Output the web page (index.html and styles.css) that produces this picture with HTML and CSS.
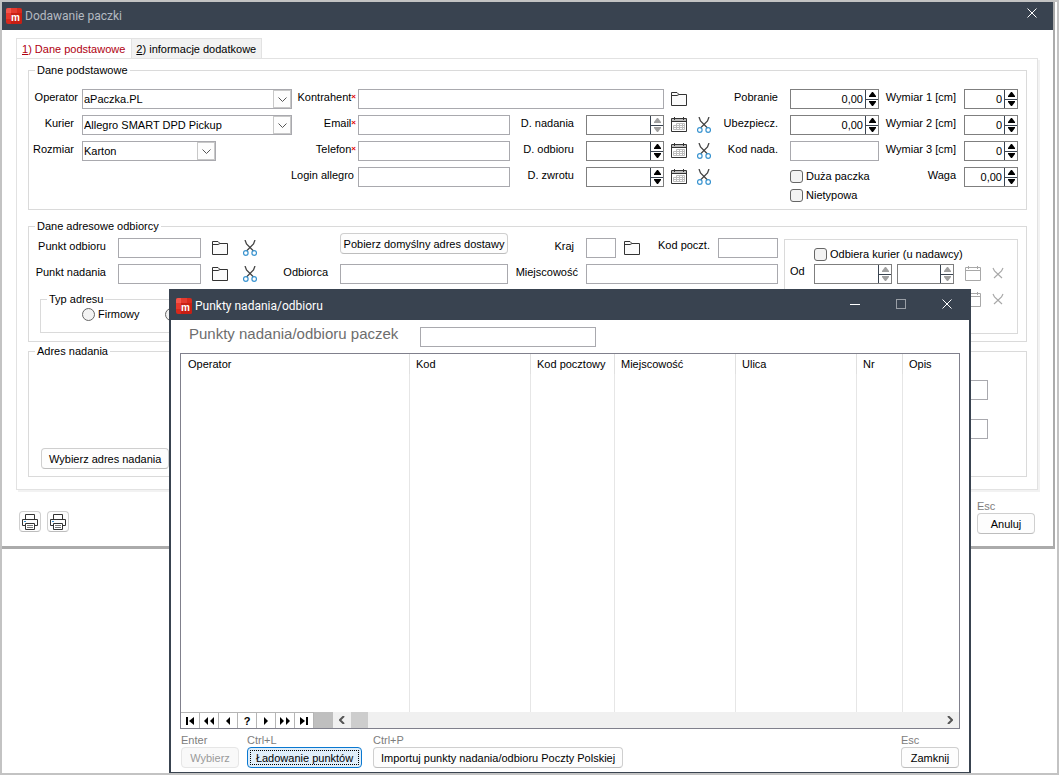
FILE: index.html
```html
<!DOCTYPE html>
<html lang="pl">
<head>
  <meta charset="UTF-8">
  <title>Dodawanie paczki</title>
  <link rel="stylesheet" href="styles.css">
</head>
<body>

  <!-- icons -->
  <svg class="sprite" aria-hidden="true">
    <symbol id="logo" viewBox="0 0 16 16">
      <rect width="16" height="16" rx="2" fill="#d9291c"/>
      <path d="M2 0h3v5H0V2a2 2 0 0 1 2-2z" fill="#f4564c"/>
      <path d="M5 0h6v5H5z" fill="#e53a2e"/>
      <path d="M0 5h5v6H0z" fill="#e8392d"/>
      <path d="M5 5h11v9a2 2 0 0 1-2 2H5z" fill="#c81f14"/>
    </symbol>
    <symbol id="folder" viewBox="0 0 16 14">
      <path d="M.5 13.500V.5h5.500l2 2h7.500v11z" fill="#fbfbfb" stroke="#333"/>
      <path d="M1 3.500h5l2-1" fill="none" stroke="#333"/>
    </symbol>
    <symbol id="calendar" viewBox="0 0 16 16">
      <path d="M1 2h14v3H1z" fill="#bdbdbd"/>
      <path d="M.5 1.500h15v13H.5zM.5 4.500h15M3.500 0v3M12.500 0v3" fill="none" stroke="#333"/>
      <path d="M5.500 6.500h8v6h-11v-4M2.500 8.500h11M2.500 10.500h11M5.500 6.500v6M8.500 6.500v6M11.500 6.500v6" fill="none" stroke="#bdbdbd"/>
    </symbol>
    <symbol id="calendar-off" viewBox="0 0 16 16">
      <path d="M.5 1.500h15v13H.5zM.5 4.500h15M3.500 0v3M12.500 0v3" fill="none" stroke="#a8a8a8"/>
    </symbol>
    <symbol id="scissors" viewBox="0 0 14 16">
      <path d="M2 0l1.500 4L10.500 11M12 0l-1.500 4L3.500 11" fill="none" stroke="#444" stroke-width="1.300"/>
      <circle cx="2.800" cy="13" r="2.300" fill="#fff" stroke="#3a94d0" stroke-width="1.200"/>
      <circle cx="11.200" cy="13" r="2.300" fill="#fff" stroke="#3a94d0" stroke-width="1.200"/>
    </symbol>
    <symbol id="scissors-off" viewBox="0 0 14 16">
      <path d="M2 2l1.500 3L11 12M12 2l-1.500 3L3 12" fill="none" stroke="#a8a8a8" stroke-width="1.200"/>
    </symbol>
    <symbol id="printer" viewBox="0 0 16 16">
      <path d="M3.500 5.500v-5h9v5M3.500 11.500h-3v-6h15v6h-3" fill="none" stroke="#333"/>
      <path d="M3.500 9.500h9v6h-9z" fill="#fff" stroke="#333"/>
      <path d="M5 11.500h6M5 13.500h6" stroke="#777"/>
      <path d="M2 7.500h2" stroke="#3a94d0"/>
    </symbol>
    <symbol id="chevron" viewBox="0 0 9 5">
      <path d="M.5.5l4 4 4-4" fill="none" stroke="#555"/>
    </symbol>
    <symbol id="up" viewBox="0 0 7 5">
      <path d="M3 0h1l3 4v1H0V4z" fill="currentColor"/>
    </symbol>
    <symbol id="down" viewBox="0 0 7 5">
      <path d="M0 0h7v1L4 5H3L0 1z" fill="currentColor"/>
    </symbol>
    <symbol id="close" viewBox="0 0 10 10">
      <path d="M.5.5l9 9M9.500.5l-9 9" stroke="#fff"/>
    </symbol>
  </svg>

  <div class="desktop">

    <div class="window">
      <div class="titlebar inactive">
        <span class="logo"><svg class="i16"><use href="#logo"/></svg><b>m</b></span>
        <span>Dodawanie paczki</span>
        <button class="win-btn" aria-label="Zamknij okno"><svg class="i10"><use href="#close"/></svg></button>
      </div>

      <div class="window-body">
        <div class="tabs">
          <button class="tab active"><u>1</u>) Dane podstawowe</button>
          <button class="tab"><u>2</u>) informacje dodatkowe</button>
        </div>

        <div class="panel">
          <fieldset class="group basic">
            <legend>Dane podstawowe</legend>
            <div class="basic-grid">
              <label class="lbl tight" for="operator">Operator</label>
              <span class="combo">
                <select id="operator"><option>aPaczka.PL</option></select>
                <span class="combo-arrow"><svg><use href="#chevron"/></svg></span>
              </span>
              <label class="lbl contact" for="kontrahent">Kontrahent<i class="req">×</i></label>
              <input class="wide" id="kontrahent" type="text">
              <div class="icons"><button class="icon" aria-label="Wybierz kontrahenta"><svg class="folder"><use href="#folder"/></svg></button></div>
              <label class="lbl" for="pobranie">Pobranie</label>
              <span class="spin">
                <input id="pobranie" type="text" value="0,00">
                <span class="arrows"><button aria-label="Więcej"><svg><use href="#up"/></svg></button><button aria-label="Mniej"><svg><use href="#down"/></svg></button></span>
              </span>
              <label class="lbl mid" for="wymiar1">Wymiar 1 [cm]</label>
              <span class="spin">
                <input id="wymiar1" type="text" value="0">
                <span class="arrows"><button aria-label="Więcej"><svg><use href="#up"/></svg></button><button aria-label="Mniej"><svg><use href="#down"/></svg></button></span>
              </span>

              <label class="lbl mid" for="kurier">Kurier</label>
              <span class="combo">
                <select id="kurier"><option>Allegro SMART DPD Pickup</option></select>
                <span class="combo-arrow"><svg><use href="#chevron"/></svg></span>
              </span>
              <label class="lbl contact" for="email">Email<i class="req">×</i></label>
              <input id="email" type="text">
              <label class="lbl" for="nadanie">D. nadania</label>
              <span class="spin off">
                <input id="nadanie" type="text">
                <span class="arrows"><button aria-label="Później"><svg><use href="#up"/></svg></button><button aria-label="Wcześniej"><svg><use href="#down"/></svg></button></span>
              </span>
              <div class="icons">
                <button class="icon" aria-label="Kalendarz"><svg class="i16"><use href="#calendar"/></svg></button>
                <button class="icon" aria-label="Wyczyść"><svg class="cut"><use href="#scissors"/></svg></button>
              </div>
              <label class="lbl" for="ubezpiecz">Ubezpiecz.</label>
              <span class="spin">
                <input id="ubezpiecz" type="text" value="0,00">
                <span class="arrows"><button aria-label="Więcej"><svg><use href="#up"/></svg></button><button aria-label="Mniej"><svg><use href="#down"/></svg></button></span>
              </span>
              <label class="lbl mid" for="wymiar2">Wymiar 2 [cm]</label>
              <span class="spin">
                <input id="wymiar2" type="text" value="0">
                <span class="arrows"><button aria-label="Więcej"><svg><use href="#up"/></svg></button><button aria-label="Mniej"><svg><use href="#down"/></svg></button></span>
              </span>

              <label class="lbl mid" for="rozmiar">Rozmiar</label>
              <span class="combo short">
                <select id="rozmiar"><option>Karton</option></select>
                <span class="combo-arrow"><svg><use href="#chevron"/></svg></span>
              </span>
              <label class="lbl contact" for="telefon">Telefon<i class="req">×</i></label>
              <input id="telefon" type="text">
              <label class="lbl" for="odbior">D. odbioru</label>
              <span class="spin">
                <input id="odbior" type="text">
                <span class="arrows"><button aria-label="Później"><svg><use href="#up"/></svg></button><button aria-label="Wcześniej"><svg><use href="#down"/></svg></button></span>
              </span>
              <div class="icons">
                <button class="icon" aria-label="Kalendarz"><svg class="i16"><use href="#calendar"/></svg></button>
                <button class="icon" aria-label="Wyczyść"><svg class="cut"><use href="#scissors"/></svg></button>
              </div>
              <label class="lbl" for="kodnada">Kod nada.</label>
              <input id="kodnada" type="text">
              <label class="lbl mid" for="wymiar3">Wymiar 3 [cm]</label>
              <span class="spin">
                <input id="wymiar3" type="text" value="0">
                <span class="arrows"><button aria-label="Więcej"><svg><use href="#up"/></svg></button><button aria-label="Mniej"><svg><use href="#down"/></svg></button></span>
              </span>

              <label class="lbl tight login" for="login">Login allegro</label>
              <input id="login" type="text">
              <label class="lbl" for="zwrot">D. zwrotu</label>
              <span class="spin">
                <input id="zwrot" type="text">
                <span class="arrows"><button aria-label="Później"><svg><use href="#up"/></svg></button><button aria-label="Wcześniej"><svg><use href="#down"/></svg></button></span>
              </span>
              <div class="icons">
                <button class="icon" aria-label="Kalendarz"><svg class="i16"><use href="#calendar"/></svg></button>
                <button class="icon" aria-label="Wyczyść"><svg class="cut"><use href="#scissors"/></svg></button>
              </div>
              <div class="checks">
                <label class="check"><input type="checkbox">Duża paczka</label>
                <label class="check"><input type="checkbox">Nietypowa</label>
              </div>
              <label class="lbl mid" for="waga">Waga</label>
              <span class="spin">
                <input id="waga" type="text" value="0,00">
                <span class="arrows"><button aria-label="Więcej"><svg><use href="#up"/></svg></button><button aria-label="Mniej"><svg><use href="#down"/></svg></button></span>
              </span>
            </div>
          </fieldset>

          <fieldset class="group address">
            <legend>Dane adresowe odbiorcy</legend>
            <div class="address-grid">
              <label class="lbl" for="punktodb">Punkt odbioru</label>
              <input id="punktodb" type="text">
              <div class="icons far">
                <button class="icon" aria-label="Wybierz punkt"><svg class="folder"><use href="#folder"/></svg></button>
                <button class="icon" aria-label="Wyczyść"><svg class="cut"><use href="#scissors"/></svg></button>
              </div>
              <button class="btn fetch">Pobierz domyślny adres dostawy</button>
              <label class="lbl" for="kraj">Kraj</label>
              <input id="kraj" type="text">
              <div class="postal">
                <button class="icon" aria-label="Wybierz kraj"><svg class="folder"><use href="#folder"/></svg></button>
                <label for="kodpoczt">Kod poczt.</label>
              </div>
              <input id="kodpoczt" type="text">

              <label class="lbl" for="punktnad">Punkt nadania</label>
              <input id="punktnad" type="text">
              <div class="icons far">
                <button class="icon" aria-label="Wybierz punkt"><svg class="folder"><use href="#folder"/></svg></button>
                <button class="icon" aria-label="Wyczyść"><svg class="cut"><use href="#scissors"/></svg></button>
              </div>
              <label class="lbl" for="odbiorca">Odbiorca</label>
              <input id="odbiorca" type="text">
              <label class="lbl mid" for="miejscowosc">Miejscowość</label>
              <input class="wide" id="miejscowosc" type="text">

              <fieldset class="group type">
                <legend>Typ adresu</legend>
                <div class="radios">
                  <label class="check"><input type="radio" name="typ">Firmowy</label>
                  <label class="check"><input type="radio" name="typ" aria-label="Prywatny"></label>
                </div>
              </fieldset>

              <div class="pickup">
                <label class="check"><input type="checkbox">Odbiera kurier (u nadawcy)</label>
                <label for="od">Od</label>
                <span class="spin off">
                  <input id="od" type="text">
                  <span class="arrows"><button aria-label="Później"><svg><use href="#up"/></svg></button><button aria-label="Wcześniej"><svg><use href="#down"/></svg></button></span>
                </span>
                <span class="spin off">
                  <input type="text" aria-label="Godzina od">
                  <span class="arrows"><button aria-label="Później"><svg><use href="#up"/></svg></button><button aria-label="Wcześniej"><svg><use href="#down"/></svg></button></span>
                </span>
                <div class="icons">
                  <button class="icon" aria-label="Kalendarz"><svg class="i16"><use href="#calendar-off"/></svg></button>
                  <button class="icon" aria-label="Wyczyść"><svg class="cut"><use href="#scissors-off"/></svg></button>
                </div>
                <label for="do">Do</label>
                <span class="spin off">
                  <input id="do" type="text">
                  <span class="arrows"><button aria-label="Później"><svg><use href="#up"/></svg></button><button aria-label="Wcześniej"><svg><use href="#down"/></svg></button></span>
                </span>
                <span class="spin off">
                  <input type="text" aria-label="Godzina do">
                  <span class="arrows"><button aria-label="Później"><svg><use href="#up"/></svg></button><button aria-label="Wcześniej"><svg><use href="#down"/></svg></button></span>
                </span>
                <div class="icons">
                  <button class="icon" aria-label="Kalendarz"><svg class="i16"><use href="#calendar-off"/></svg></button>
                  <button class="icon" aria-label="Wyczyść"><svg class="cut"><use href="#scissors-off"/></svg></button>
                </div>
              </div>
            </div>
          </fieldset>

          <fieldset class="group sender">
            <legend>Adres nadania</legend>
            <div class="sender-row">
              <button class="btn">Wybierz adres nadania</button>
              <div class="sender-fields">
                <input type="text" aria-label="Ulica">
                <input type="text" aria-label="Miejscowość">
              </div>
            </div>
          </fieldset>
        </div>

        <div class="window-footer">
          <button class="btn print" aria-label="Drukuj"><svg class="i16"><use href="#printer"/></svg></button>
          <button class="btn print" aria-label="Drukuj etykietę"><svg class="i16"><use href="#printer"/></svg></button>
          <div class="action end">
            <span class="key">Esc</span>
            <button class="btn">Anuluj</button>
          </div>
        </div>
      </div>
    </div>

    <div class="dialog">
      <div class="titlebar">
        <span class="logo"><svg class="i16"><use href="#logo"/></svg><b>m</b></span>
        <span>Punkty nadania/odbioru</span>
        <div class="win-btns">
          <button class="win-btn" aria-label="Minimalizuj"><i class="min"></i></button>
          <button class="win-btn" aria-label="Maksymalizuj"><i class="max"></i></button>
          <button class="win-btn" aria-label="Zamknij okno"><svg class="i10"><use href="#close"/></svg></button>
        </div>
      </div>

      <div class="dialog-body">
        <div class="search">
          <label for="szukaj">Punkty nadania/odbioru paczek</label>
          <input id="szukaj" type="text">
        </div>

        <div class="points">
          <table>
            <colgroup>
              <col class="c-operator"><col class="c-text"><col class="c-postal"><col class="c-text"><col class="c-text"><col class="c-nr"><col>
            </colgroup>
            <thead>
              <tr><th>Operator</th><th>Kod</th><th>Kod pocztowy</th><th>Miejscowość</th><th>Ulica</th><th>Nr</th><th>Opis</th></tr>
            </thead>
            <tbody>
              <tr><td></td><td></td><td></td><td></td><td></td><td></td><td></td></tr>
            </tbody>
          </table>
          <div class="navigator">
            <button aria-label="Pierwszy"><svg viewBox="0 0 12 8"><path d="M2 0h2v8H2zM10 0v8L5 4z"/></svg></button>
            <button aria-label="Strona wstecz"><svg viewBox="0 0 12 8"><path d="M5 0v8L1 4zM11 0v8L7 4z"/></svg></button>
            <button aria-label="Poprzedni"><svg viewBox="0 0 12 8"><path d="M8 0v8L4 4z"/></svg></button>
            <button>?</button>
            <button aria-label="Następny"><svg viewBox="0 0 12 8"><path d="M4 0v8l4-4z"/></svg></button>
            <button aria-label="Strona dalej"><svg viewBox="0 0 12 8"><path d="M1 0v8l4-4zM7 0v8l4-4z"/></svg></button>
            <button aria-label="Ostatni"><svg viewBox="0 0 12 8"><path d="M2 0v8l5-4zM8 0h2v8H8z"/></svg></button>
            <span class="filler"></span>
            <div class="scroll">
              <button aria-label="W lewo"><svg viewBox="0 0 6 8"><path d="M5 0L1 4l4 4"/></svg></button>
              <span class="thumb"></span>
              <button class="right" aria-label="W prawo"><svg viewBox="0 0 6 8"><path d="M1 0l4 4-4 4"/></svg></button>
            </div>
          </div>
        </div>

        <div class="dialog-footer">
          <div class="action">
            <span class="key">Enter</span>
            <button class="btn" disabled>Wybierz</button>
          </div>
          <div class="action load">
            <span class="key">Ctrl+L</span>
            <button class="btn focused">Ładowanie punktów</button>
          </div>
          <div class="action import">
            <span class="key">Ctrl+P</span>
            <button class="btn">Importuj punkty nadania/odbioru Poczty Polskiej</button>
          </div>
          <div class="action end">
            <span class="key">Esc</span>
            <button class="btn">Zamknij</button>
          </div>
        </div>
      </div>
    </div>

  </div>

</body>
</html>
```

FILE: styles.css
```css
* {
  box-sizing: border-box;
}

body {
  margin: 0;
  font-family: "Liberation Sans", Arial, sans-serif;
  font-size: 11px;
  line-height: 14px;
  color: #000;
  background-color: #fff;
}

input, select, button {
  margin: 0;
  font: inherit;
  color: inherit;
}

button {
  padding: 0;
  border: none;
  background: none;
}

svg {
  display: block;
}

label {
  white-space: nowrap;
}

.sprite {
  position: absolute;
  width: 0;
  height: 0;
}

.desktop {
  position: relative;
  height: 100vh;
  border: 2px solid #c3c3c3;
  overflow: hidden;
}

/* windows */
.window {
  margin-right: 2px;
  border-right: 2px solid #ababab;
  border-bottom: 3px solid #ababab;
}

.titlebar {
  display: flex;
  align-items: center;
  gap: 3px;
  height: 31px;
  padding: 3px 17px 0 5px;
  background-color: #394350;
  color: #fff;
  font-family: Roboto, "Open Sans", sans-serif;
  font-size: 12px;
}

.titlebar.inactive {
  height: 28px;
  padding: 0 16px 0 4px;
  color: #b4bac1;
}

.inactive .win-btn {
  margin-left: auto;
  padding-bottom: 6px;
}

.logo {
  position: relative;
}

.logo b {
  position: absolute;
  right: 2px;
  bottom: 1px;
  font-family: "Liberation Sans", Arial, sans-serif;
  font-size: 10px;
  line-height: 10px;
  color: #fff;
}

.win-btns {
  display: flex;
  align-items: center;
  gap: 36px;
  margin-left: auto;
  padding-bottom: 4px;
}

.min {
  display: block;
  width: 10px;
  height: 1px;
  background-color: #fff;
}

.max {
  display: block;
  width: 10px;
  height: 10px;
  border: 1px solid #9a9fa6;
}

.i10 {
  width: 10px;
  height: 10px;
}

.i16 {
  width: 16px;
  height: 16px;
}

.folder {
  width: 16px;
  height: 14px;
}

.cut {
  width: 14px;
  height: 16px;
}

.window-body {
  padding: 8px 15px 0 14px;
}

/* tabs */
.tabs {
  display: flex;
  height: 20px;
}

.tab {
  padding: 0 5px;
  border: 1px solid #e2e2e2;
  border-bottom: none;
  background-color: #f2f2f2;
}

.tab + .tab {
  padding: 0 5px 0 4px;
  border-left: none;
}

.tab.active {
  padding: 0 6px 0 5px;
  background-color: #fff;
  color: #b00010;
}

.panel {
  padding: 4px 10px 12px 11px;
  border: 1px solid #e2e2e2;
  box-shadow: 2px 2px 0 #f2f2f2;
}

/* form groups */
.group {
  min-width: 0;
  margin: 0;
  border: 1px solid #dadada;
}

.group legend {
  padding: 0 2px;
}

.basic {
  padding: 12px 8px 6px 6px;
}

.address {
  margin-top: 9px;
  padding: 5px 8px 7px 6px;
}

.sender {
  margin-top: 2px;
  padding: 22px 8px 7px 6px;
}

.basic-grid {
  display: grid;
  grid-template-columns: 43px 210fr 58px 152fr 68px 78fr 44px 70px 89fr 77px 54fr;
  grid-template-rows: repeat(4, 20px) 10px;
  gap: 6px 4px;
}

.basic-grid .wide {
  grid-column: span 3;
}

.lbl {
  display: flex;
  justify-content: flex-end;
  height: 16px;
  line-height: 16px;
  padding-right: 8px;
}

.lbl.tight {
  padding-right: 0;
}

.lbl.mid {
  padding-right: 4px;
}

.lbl.contact {
  margin-right: -2px;
  padding-right: 0;
}

.login {
  grid-column: 3;
}

.req {
  font-size: 8px;
  font-style: normal;
  font-weight: bold;
  color: #e00000;
}

input[type="text"] {
  width: 100%;
  min-width: 0;
  height: 20px;
  padding: 0 2px;
  border: 1px solid #a9a9ae;
  border-radius: 0;
  background-color: #fff;
}

.combo {
  position: relative;
  height: 20px;
}

.combo.short {
  width: 64%;
}

.combo select {
  width: 100%;
  height: 20px;
  padding: 0 20px 0 1px;
  border: 1px solid #a9a9ae;
  border-radius: 0;
  background-color: #fff;
  appearance: none;
}

.combo-arrow {
  position: absolute;
  top: 1px;
  right: 1px;
  display: flex;
  align-items: center;
  justify-content: center;
  width: 18px;
  height: 18px;
  border: 1px solid #c8c8c8;
  background-color: #fdfdfd;
  pointer-events: none;
}

.combo-arrow svg {
  width: 9px;
  height: 5px;
}

.spin {
  display: flex;
  height: 20px;
  border: 1px solid #7f7f7f;
}

.spin input[type="text"] {
  flex: 1;
  height: 18px;
  border: none;
  text-align: right;
}

.arrows {
  display: flex;
  flex-direction: column;
  width: 13px;
  border-left: 1px solid #394350;
}

.arrows button {
  display: flex;
  flex: 1;
  align-items: center;
  justify-content: center;
}

.arrows button + button {
  border-top: 1px solid #394350;
}

.arrows svg {
  width: 7px;
  height: 5px;
}

.off .arrows {
  color: #a0a0a0;
}

.icons {
  display: flex;
  align-items: center;
  gap: 10px;
  height: 20px;
  padding-left: 3px;
}

.icons.far {
  gap: 15px;
  padding-left: 7px;
}

.checks {
  display: flex;
  flex-direction: column;
  gap: 3px;
  grid-row: span 2;
  grid-column: 9;
  padding-top: 1px;
}

.check {
  display: flex;
  align-items: center;
  gap: 3px;
  height: 16px;
}

.check input {
  width: 13px;
  height: 13px;
  border: 1px solid #666;
  border-radius: 3px;
  background-color: #f3f3f3;
  appearance: none;
}

.check input[type="radio"] {
  border-radius: 50%;
}

.check input:checked {
  background-color: #394350;
}

/* receiver address */
.address-grid {
  display: grid;
  grid-template-columns: 79px 83fr 72px 55px 168fr 70px 30fr 94px 60fr 236fr;
  grid-template-rows: 20px 20px auto;
  gap: 6px 4px;
}

.address-grid .wide {
  grid-column: span 3;
}

.btn {
  height: 21px;
  padding: 0 7px;
  border: 1px solid #cfcfcf;
  border-bottom-color: #bdbdbd;
  border-radius: 4px;
  background-color: #fdfdfd;
  white-space: nowrap;
}

.btn:disabled {
  border-color: #e6e6e6;
  background-color: #f9f9f9;
  color: #9a9a9a;
}

.fetch {
  grid-column: 5;
  margin-top: -5px;
  padding: 0;
}

.postal {
  display: flex;
  align-items: center;
  gap: 18px;
  padding-left: 4px;
}

.postal label {
  align-self: flex-start;
}

.type {
  grid-row: 3;
  grid-column: 1 / 10;
  align-self: start;
  margin: 2px 0 0 5px;
  padding: 0 0 10px 6px;
}

.radios {
  display: flex;
  gap: 25px;
  padding-left: 35px;
}

.pickup {
  display: grid;
  grid-template-columns: 19px 78fr 57fr 50px;
  grid-template-rows: 18px 26px 26px;
  column-gap: 5px;
  align-items: start;
  grid-row: 1 / 4;
  grid-column: 10;
  margin: 1px 0 0 2px;
  padding: 6px 8px 17px 5px;
  border: 1px solid #dadada;
}

.pickup .check {
  grid-column: 2 / 5;
}

.pickup .icons {
  padding-left: 6px;
}

/* sender address */
.sender-row {
  display: flex;
  justify-content: space-between;
  align-items: flex-end;
  height: 89px;
  padding: 0 30px 0 6px;
}

.sender-fields {
  display: flex;
  flex-direction: column;
  align-self: flex-start;
  gap: 19px;
  width: 30%;
}

.window-footer {
  display: flex;
  gap: 6px;
  padding: 9px 3px 12px 3px;
}

.print {
  width: 22px;
  margin-top: 12px;
  padding: 0 2px;
}

.action {
  display: flex;
  flex-direction: column;
}

.action .btn {
  min-width: 58px;
}

.action.end {
  margin-left: auto;
}

.key {
  color: #7d7d7d;
}

/* points dialog */
.dialog {
  position: absolute;
  top: 287px;
  left: 167px;
  right: 86px;
  bottom: 0;
  display: flex;
  flex-direction: column;
  border: 2px solid #394350;
  border-top: none;
  border-bottom-width: 1px;
  background-color: #fff;
}

.dialog-body {
  display: flex;
  flex: 1;
  flex-direction: column;
  min-height: 0;
  padding: 7px 9px 4px;
}

.search {
  display: flex;
  gap: 22px;
  padding: 0 9px 6px;
}

.search label {
  font-size: 15px;
  color: #6d6d6d;
}

.search input[type="text"] {
  width: 176px;
}

.points {
  display: flex;
  flex: 1;
  flex-direction: column;
  min-height: 0;
  border: 1px solid #80808c;
}

.points table {
  flex: 1;
  width: 100%;
  border-spacing: 0;
  table-layout: fixed;
}

.points th {
  height: 20px;
  padding: 0 0 0 6px;
  border-left: 1px solid #e0e0e0;
  font-weight: normal;
  text-align: left;
  white-space: nowrap;
}

.points td {
  padding: 0;
  border-left: 1px solid #e6e6e6;
}

.points th:first-child,
.points td:first-child {
  padding-left: 7px;
  border-left: none;
}

.c-operator {
  width: 228px;
}

.c-text {
  width: 121px;
}

.c-postal {
  width: 84px;
}

.c-nr {
  width: 46px;
}

.navigator {
  display: flex;
  height: 16px;
  background-color: #f0f0f0;
}

.navigator > button {
  display: flex;
  align-items: center;
  justify-content: center;
  width: 19px;
  border-top: 1px solid #b5b5b5;
  border-right: 1px solid #b5b5b5;
  background-color: #fff;
  font-weight: bold;
}

.navigator svg {
  width: 12px;
  height: 8px;
}

.filler {
  width: 19px;
  background-color: #bfbfbf;
}

.scroll {
  display: flex;
  flex: 1;
}

.scroll button {
  display: flex;
  align-items: center;
  justify-content: center;
  width: 18px;
}

.scroll .right {
  margin-left: auto;
}

.scroll svg {
  width: 6px;
  fill: none;
  stroke: #555;
  stroke-width: 2px;
}

.thumb {
  width: 17px;
  background-color: #cdcdcd;
}

.dialog-footer {
  display: flex;
  gap: 8px;
  padding: 4px 1px 0;
}

.load .btn {
  width: 115px;
}

.import {
  margin-left: 3px;
}

.import .btn {
  width: 250px;
}

.btn.focused {
  border-color: #0a78d0;
  outline: 1px dotted #000;
  outline-offset: -4px;
  background-color: #e0eefa;
}
```
